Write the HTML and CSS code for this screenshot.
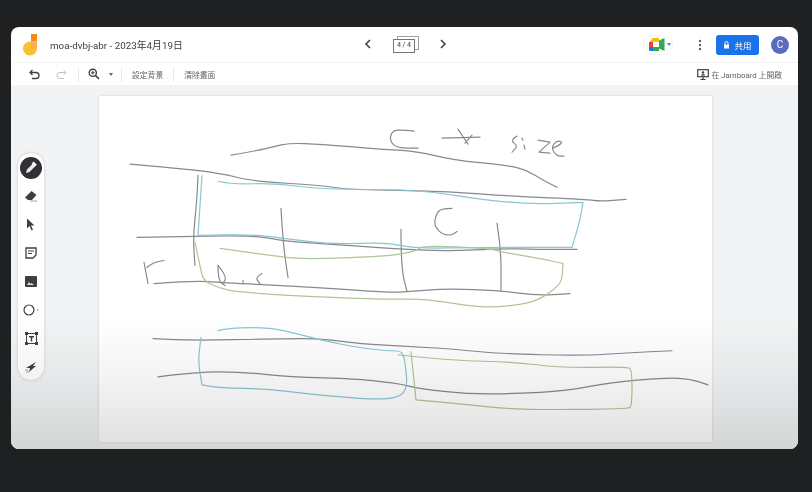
FILE: index.html
```html
<!DOCTYPE html>
<html lang="zh-Hant">
<head>
    <meta charset="UTF-8">
    <title>moa-dvbj-abr - Jamboard</title>
    <link rel="stylesheet" href="styles.css">
</head>
<body>
    <div class="window">
        <header class="top-bar">
            <div class="title-group">
                <svg class="logo" width="16" height="22" viewBox="0 0 16 22">
                    <path d="M8 7h6v7.500a7 7 0 1 1-7-7h1z" fill="#fbc02d"/>
                    <rect x="8" y="0" width="6" height="7" fill="#f28c1e"/>
                    <rect x="8" y="7" width="6" height="7.500" fill="#f6ae5a"/>
                </svg>
                <span class="doc-title">moa-dvbj-abr - 2023年4月19日</span>
            </div>
            <div class="pager">
                <svg width="8" height="10" viewBox="0 0 8 10"><path d="M6 1 2 5l4 4" fill="none" stroke="#3c4043" stroke-width="1.600"/></svg>
                <div class="slides">
                    <span class="slide-back"></span>
                    <span class="slide-front">4 / 4</span>
                </div>
                <svg width="8" height="10" viewBox="0 0 8 10"><path d="m2 1 4 4-4 4" fill="none" stroke="#3c4043" stroke-width="1.600"/></svg>
            </div>
            <div class="top-actions">
                <div class="meet-btn">
                    <svg width="16" height="13" viewBox="0 0 16 13">
                        <path d="M3.500 0H10v4H4v1H0z" fill="#fbbc04"/>
                        <rect x="0" y="4" width="4" height="5" fill="#ea4335"/>
                        <path d="M0 9h4v4H1.500A1.500 1.500 0 0 1 0 11.500z" fill="#1a73e8"/>
                        <path d="M4 9h6v4H4z" fill="#34a853"/>
                        <rect x="4" y="4" width="6" height="5" fill="#fff"/>
                        <path d="M10 2.500 15.500 0v13L10 10.500z" fill="#34a853"/>
                    </svg>
                    <span class="meet-caret"></span>
                </div>
                <svg class="more" width="4" height="12" viewBox="0 0 4 12" fill="#5f6368">
                    <circle cx="2" cy="2" r="1.200"/><circle cx="2" cy="6" r="1.200"/><circle cx="2" cy="10" r="1.200"/>
                </svg>
                <button class="share-btn">
                    <svg width="7" height="8" viewBox="0 0 7 8"><path d="M1 3.500h5V7.500H1z" fill="#fff"/><path d="M2 3.500V2a1.500 1.500 0 0 1 3 0v1.500" fill="none" stroke="#fff"/></svg>
                    共用
                </button>
                <div class="avatar">C</div>
            </div>
        </header>

        <div class="tool-bar">
            <svg class="tb-icon" width="12" height="11" viewBox="0 0 12 11"><path d="M3.500 1 1 3.500 3.500 6M1.500 3.500h5.500a2.800 2.800 0 0 1 0 6H3" fill="none" stroke="#3c4043" stroke-width="1.300"/></svg>
            <svg class="tb-icon tb-redo" width="12" height="11" viewBox="0 0 12 11"><path d="M8.500 1 11 3.500 8.500 6M10.500 3.500H5a2.800 2.800 0 0 0 0 6h4" fill="none" stroke="#bdc1c6" stroke-width="1"/></svg>
            <span class="sep"></span>
            <svg class="tb-icon tb-zoom" width="12" height="12" viewBox="0 0 12 12"><circle cx="4.800" cy="4.800" r="3.600" fill="none" stroke="#3c4043" stroke-width="1.400"/><path d="m7.500 7.500 3.500 3.500" stroke="#3c4043" stroke-width="1.700"/><path d="M3 4.800h3.600M4.800 3v3.600" stroke="#3c4043"/></svg>
            <span class="caret"></span>
            <span class="sep"></span>
            <span class="tb-text">設定背景</span>
            <span class="sep"></span>
            <span class="tb-text">清除畫面</span>
            <div class="open-in">
                <svg width="12" height="11" viewBox="0 0 12 11"><rect x="0.700" y="0.700" width="10.600" height="7" fill="none" stroke="#3c4043" stroke-width="1.200"/><path d="M6 8v2.500M3.500 10.500h5" stroke="#3c4043" stroke-width="1.200"/><circle cx="6" cy="3.400" r="1.200" fill="#3c4043"/><path d="M3.800 6.600a2.200 1.600 0 0 1 4.400 0z" fill="#3c4043"/></svg>
                <span class="tb-text">在 Jamboard 上開啟</span>
            </div>
        </div>

        <main class="canvas">
            <div class="board">
                <svg class="ink" id="ink" viewBox="99 96 613 345" preserveAspectRatio="none"></svg>
            </div>
            <nav class="side-tools">
                <span class="tool tool-active">
                    <svg width="14" height="14" viewBox="0 0 14 14"><path d="M2 12 3 8.500 8.500 3 11 5.500 5.500 11z" fill="#e8eaed"/><rect x="8" y="1.500" width="4.500" height="3" transform="rotate(45 10 3)" fill="#fff"/></svg>
                </span>
                <span class="tool"><svg width="14" height="12" viewBox="0 0 14 12"><path d="M1 7.500 7.500 1l5 4-4.500 5H4z" fill="#3c4043"/><path d="M6 11h7" stroke="#9aa0a6"/></svg></span>
                <span class="tool"><svg width="10" height="13" viewBox="0 0 10 13"><path d="M1 0.500v10l2.500-2.500 2 4.500 1.500-.7-2-4.300h3.500z" fill="#3c4043"/></svg></span>
                <span class="tool"><svg width="12" height="12" viewBox="0 0 12 12"><path d="M1 1h10v7l-3 3H1z" fill="none" stroke="#3c4043" stroke-width="1.300"/><path d="M3 4h6M3 6.500h4" stroke="#3c4043"/></svg></span>
                <span class="tool"><svg width="12" height="11" viewBox="0 0 12 11"><rect width="12" height="11" rx="1" fill="#3c4043"/><path d="m2 9 2-3 1.500 2 1-1 2.500 2z" fill="#dadce0"/></svg></span>
                <span class="tool"><svg width="17" height="12" viewBox="0 0 17 12"><circle cx="6" cy="6" r="5" fill="none" stroke="#3c4043" stroke-width="1.200"/><path d="m14 5 2 1-2 1z" fill="#9aa0a6"/></svg></span>
                <span class="tool"><svg width="13" height="13" viewBox="0 0 13 13"><rect x="1.500" y="1.500" width="10" height="10" fill="none" stroke="#3c4043"/><g fill="#3c4043"><rect width="3" height="3"/><rect x="10" width="3" height="3"/><rect y="10" width="3" height="3"/><rect x="10" y="10" width="3" height="3"/><path d="M4 4h5v1.500H7.200V9.500H5.800V5.500H4z"/></g></svg></span>
                <span class="tool"><svg width="12" height="12" viewBox="0 0 12 12"><path d="M1 7 11 1 8 5l3 0-7 6 1-4z" fill="#3c4043"/><path d="M0 9h3M1 11h3" stroke="#9aa0a6"/></svg></span>
            </nav>
            <div class="video-shade"></div>
        </main>
    </div>
    <script src="ink.js"></script>
</body>
</html>
```

FILE: styles.css
```css
* {
    box-sizing: border-box;
}
html, body {
    height: 100%;
}
body {
    margin: 0;
    padding: 27px 14px 43px 11px;
    background-color: #1f2022;
    font-family: Roboto, "Noto Sans CJK TC", sans-serif;
    overflow: hidden;
}
.window {
    height: 100%;
    display: flex;
    flex-direction: column;
    background: #fff;
    border-radius: 8px;
    overflow: hidden;
    filter: blur(0.45px);
}
.top-bar {
    position: relative;
    height: 35px;
    flex: none;
    display: flex;
    align-items: center;
    justify-content: space-between;
    padding: 0 9px 0 12px;
}
.title-group {
    display: flex;
    align-items: center;
    gap: 11px;
}
.logo {
    margin-top: 1px;
}
.doc-title {
    font-size: 9.800px;
    color: #3c4043;
}
.pager {
    position: absolute;
    left: 353px;
    top: 8px;
    display: flex;
    align-items: center;
    gap: 20px;
}
.slides {
    position: relative;
    width: 26px;
    height: 18px;
    margin-left: 1px;
}
.slide-back {
    position: absolute;
    top: 1px;
    right: 0;
    width: 22px;
    height: 14px;
    border: 1px solid #9aa0a6;
}
.slide-front {
    position: absolute;
    left: 0;
    bottom: 0;
    width: 22px;
    height: 14px;
    border: 1.500px solid #70757a;
    background: #fff;
    font-size: 7px;
    font-weight: 500;
    line-height: 11px;
    text-align: center;
    color: #5f6368;
}
.top-actions {
    display: flex;
    align-items: center;
}
.meet-btn {
    width: 30px;
    height: 20px;
    margin-right: 25px;
    display: flex;
    align-items: center;
    gap: 2px;
    padding-left: 5px;
    border: 1px solid #f1f3f4;
    border-radius: 10px;
}
.meet-caret {
    border-top: 3px solid #4285f4;
    border-left: 2.500px solid transparent;
    border-right: 2.500px solid transparent;
}
.more {
    margin-right: 14px;
}
.share-btn {
    width: 43px;
    height: 20px;
    margin-right: 12px;
    display: flex;
    align-items: center;
    justify-content: center;
    gap: 4px;
    padding: 0;
    border: none;
    border-radius: 3px;
    background: #1a73e8;
    color: #fff;
    font-family: inherit;
    font-size: 8.500px;
}
.avatar {
    width: 18px;
    height: 18px;
    border-radius: 50%;
    background: #5c6bc0;
    color: #fff;
    font-size: 10px;
    line-height: 18px;
    text-align: center;
}
.tool-bar {
    height: 23px;
    flex: none;
    display: flex;
    align-items: center;
    padding: 0 16px 0 18px;
    border-top: 1px solid #f1f3f4;
}
.tb-icon {
    margin-right: 14px;
}
.tb-redo {
    margin-right: 11px;
}
.tb-zoom {
    margin-right: 9px;
}
.sep {
    width: 1px;
    height: 15px;
    margin: 0 9px 0 0;
    background: #e8eaed;
}
.caret {
    margin-right: 8px;
    border-top: 3px solid #5f6368;
    border-left: 2.500px solid transparent;
    border-right: 2.500px solid transparent;
}
.caret + .sep {
    margin-right: 10px;
}
.tb-text {
    font-size: 7.800px;
    color: #5f6368;
}
.tb-text + .sep {
    margin: 0 10px;
}
.open-in {
    margin-left: auto;
    display: flex;
    align-items: center;
    gap: 3px;
}
.canvas {
    position: relative;
    flex: 1;
    min-height: 0;
    display: flex;
    padding: 11px 86px 7px 88px;
    background: #f1f3f4;
}
.board {
    flex: 1;
    background: #fff;
    box-shadow: 0 0 2px rgba(60, 64, 67, 0.2);
}
.ink {
    display: block;
    width: 100%;
    height: 100%;
}
.ink path {
    fill: none;
    stroke-width: 1.200;
    stroke-linejoin: round;
    stroke-linecap: round;
}
.ink-gray {
    stroke: #88898c;
}
.ink-blue {
    stroke: #86c8d2;
}
.ink-green {
    stroke: #aec596;
}
.side-tools {
    position: absolute;
    left: 7px;
    top: 68px;
    width: 26px;
    height: 227px;
    display: flex;
    flex-direction: column;
    align-items: center;
    padding-top: 4px;
    border-radius: 13px;
    background: #fff;
    box-shadow: 0 0 3px rgba(60, 64, 67, 0.25);
}
.tool {
    width: 22px;
    height: 22px;
    flex: none;
    margin-bottom: 6.400px;
    display: flex;
    align-items: center;
    justify-content: center;
}
.tool-active {
    border-radius: 50%;
    background: #303134;
}
.video-shade {
    position: absolute;
    left: 0;
    right: 0;
    bottom: 0;
    height: 135px;
    background: linear-gradient(rgba(0, 0, 0, 0), rgba(0, 0, 0, 0.04) 40%, rgba(0, 0, 0, 0.12));
    pointer-events: none;
}
```

FILE: ink.js
```js
// pen strokes of the board, in screen coordinates (viewBox of #ink)
// a point written twice is a sharp corner
const strokes = {
    gray: [
        [[231,155],[260,150],[275,146],[290,143],[320,144],[380,149],[417,151],[453,160],[507,165],[527,170],[543,180],[557,187]],
        [[130,164],[177,168],[220,173],[253,181],[320,185],[347,189],[390,190],[447,191],[513,196],[587,199],[600,201],[626,199]],
        [[198,175],[197,200],[193,237],[195,265]],
        [[137,237],[193,236],[253,235],[287,241],[333,244],[390,248],[447,251],[500,248],[540,249],[577,249]],
        [[281,208],[283,243],[288,277]],
        [[401,229],[401,267],[407,291]],
        [[497,223],[501,247],[501,290]],
        [[154,283],[193,280],[223,282],[320,287],[390,292],[407,291],[447,288],[500,290],[537,295],[570,293]],
        [[452,208],[443,208],[437,212],[434,223],[438,230],[443,234],[451,235],[457,231]],
        [[414,131],[397,129],[391,133],[390,141],[397,148],[418,148]],
        [[442,138],[480,137]],
        [[458,129],[468,144]],
        [[465,143],[472,135]],
        [[517,136],[510,140],[518,146],[512,152]],
        [[522,138],[523,140]],
        [[524,145],[525,149]],
        [[538,140],[550,142],[550,142],[539,152],[539,152],[550,153]],
        [[553,148],[564,143],[557,140],[551,148],[557,156],[564,156]],
        [[144,262],[148,283]],
        [[147,267],[153,262],[164,260]],
        [[218,265],[218,280],[225,285]],
        [[218,265],[227,276],[223,283]],
        [[243,280],[243,282]],
        [[262,273],[255,277],[260,283]],
        [[153,338],[183,340],[283,338],[323,338],[357,343],[430,347],[450,348],[500,353],[583,355],[627,352],[672,350]],
        [[158,376],[197,371],[240,371],[290,376],[357,378],[383,381],[400,383],[420,388],[467,393],[513,393],[567,390],[613,381],[667,377],[690,378],[708,384]]
    ],
    blue: [
        [[218,181],[230,184],[277,183],[320,189],[390,189],[437,192],[480,199],[530,204],[583,202],[583,202],[580,220],[572,247],[572,247],[480,247],[420,248],[400,245],[380,242],[333,244],[283,238],[253,234],[198,235],[198,235],[202,175]],
        [[218,330],[230,327],[270,327],[297,333],[323,340],[360,347],[387,350],[400,350],[404,355],[406,370],[407,383],[404,392],[398,396],[387,398],[363,398],[307,393],[267,388],[220,387],[202,384],[202,384],[198,360],[201,337]]
    ],
    green: [
        [[195,242],[200,265],[203,280],[220,288],[237,291],[287,295],[390,299],[423,298],[467,305],[493,307],[527,303],[543,297],[556,287],[562,280],[563,263],[563,263],[540,258],[503,252],[490,248],[423,245],[417,250],[400,254],[380,256],[303,259],[270,255],[220,248]],
        [[398,354],[453,360],[513,361],[560,367],[627,366],[632,369],[632,405],[628,408],[517,409],[460,403],[416,399],[416,399],[411,351]]
    ]
};

// quadratic curves through the midpoints, so the line never overshoots
function smoothPath(pts) {
    let d = 'M' + pts[0].join(' ');
    for (let i = 1; i < pts.length - 1; i++) {
        const midX = (pts[i][0] + pts[i + 1][0]) / 2;
        const midY = (pts[i][1] + pts[i + 1][1]) / 2;
        d += 'Q' + pts[i].join(' ') + ' ' + midX + ' ' + midY;
    }
    return d + 'L' + pts[pts.length - 1].join(' ');
}

const svg = document.getElementById('ink');
const NS = 'http://www.w3.org/2000/svg';
Object.keys(strokes).forEach(colour => {
    strokes[colour].forEach(pts => {
        const path = document.createElementNS(NS, 'path');
        path.setAttribute('class', 'ink-' + colour);
        path.setAttribute('d', smoothPath(pts));
        svg.appendChild(path);
    });
});
```
